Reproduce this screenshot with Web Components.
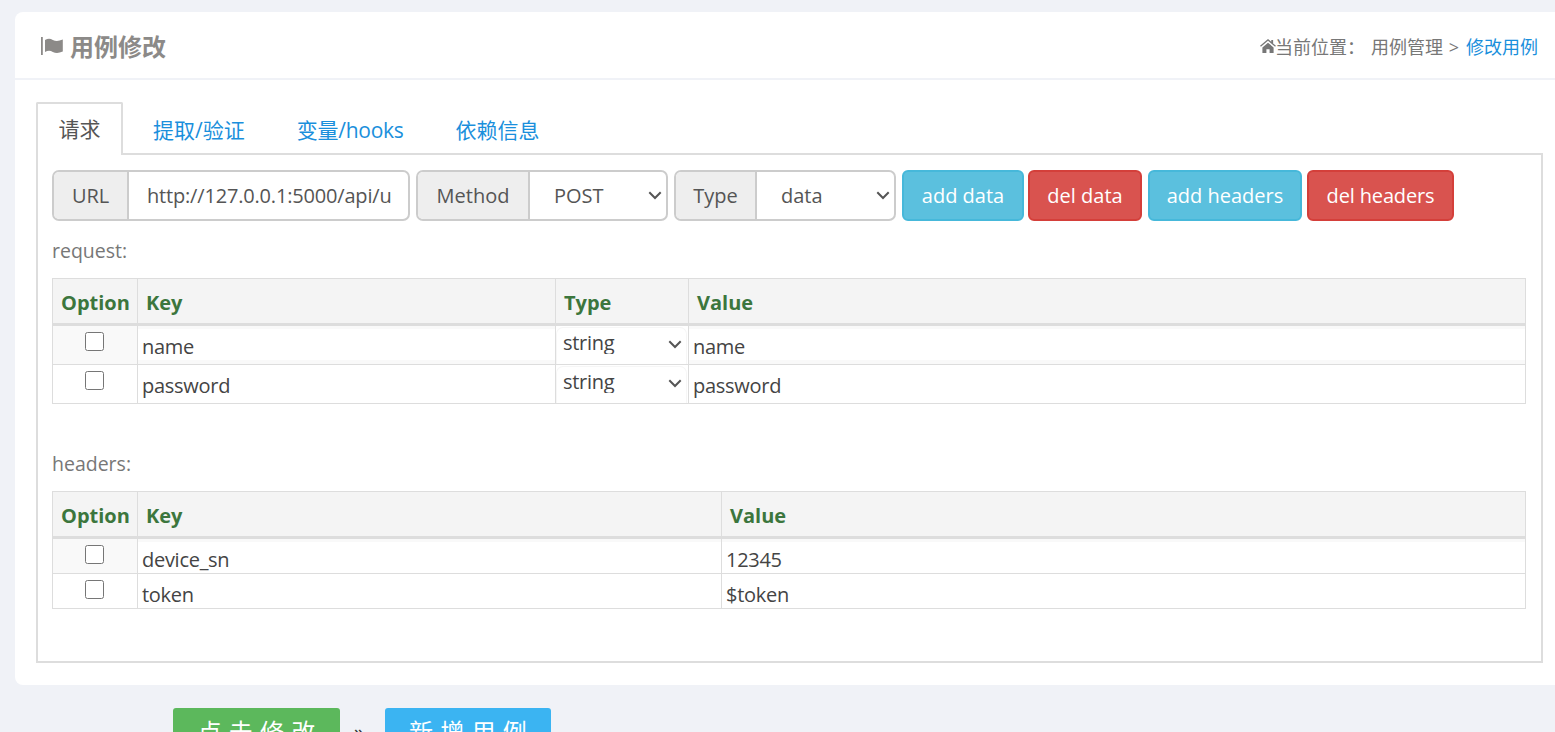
<!DOCTYPE html>
<html lang="zh"><head><meta charset="utf-8"><title>用例修改</title>
<style>
html,body{margin:0;padding:0;height:732px;overflow:hidden;background:#f0f2f7}
body{font-family:"Open Sans","Noto Sans CJK SC",sans-serif;color:#555}
</style></head><body>
<case-page>
  <case-card>
    <case-header slot="header">
      <span slot="title">用例修改</span>
      <span slot="crumb">当前位置：</span>
      <span slot="crumb2">用例管理 &gt;</span>
      <span slot="crumb3">修改用例</span>
    </case-header>
    <case-tabs>
      <tab-item active>请求</tab-item>
      <tab-item>提取/验证</tab-item>
      <tab-item style="letter-spacing:-.25px;padding-right:22px">变量/hooks</tab-item>
      <tab-item>依赖信息</tab-item>
    </case-tabs>
    <tab-panel>
      <tool-bar>
        <input-group label="URL" w="358" lw="75" style="letter-spacing:-.18px">http://127.0.0.1:5000/api/u</input-group>
        <input-group label="Method" w="252" lw="112" select>POST</input-group>
        <input-group label="Type" w="222" lw="81" select>data</input-group>
        <flat-btn kind="info" w="122">add data</flat-btn>
        <flat-btn kind="danger" w="114" style="margin-left:-2px">del data</flat-btn>
        <flat-btn kind="info" w="154">add headers</flat-btn>
        <flat-btn kind="danger" w="147" style="margin-left:-1px;letter-spacing:-.15px">del headers</flat-btn>
      </tool-bar>
      <sec-label style="--t:17px;--b:14px">request:</sec-label>
      <data-table cols="85px 418px 133px 1fr" style="--rh:39px;--rh1:38px;--pb:4px;--gb:4px">
        <t-h>Option</t-h><t-h>Key</t-h><t-h>Type</t-h><t-h>Value</t-h>
        <t-c box odd></t-c><t-c odd>name</t-c><t-c sel odd>string</t-c><t-c odd>name</t-c>
        <t-c box></t-c><t-c>password</t-c><t-c sel>string</t-c><t-c>password</t-c>
      </data-table>
      <sec-label style="--t:47px;--b:14px">headers:</sec-label>
      <data-table cols="85px 584px 1fr" style="--rh:35px;--rh1:34px;--pb:0px;--gb:0px">
        <t-h>Option</t-h><t-h>Key</t-h><t-h>Value</t-h>
        <t-c box odd></t-c><t-c odd>device_sn</t-c><t-c odd>12345</t-c>
        <t-c box></t-c><t-c>token</t-c><t-c>$token</t-c>
      </data-table>
    </tab-panel>
  </case-card>
  <action-bar>
    <big-btn color="#5cb85c" w="167">点 击 修 改</big-btn>
    <span class="sep">»</span>
    <big-btn color="#3bb4f2" w="166">新 增 用 例</big-btn>
  </action-bar>
</case-page>
<script>
const chev='<svg width="14" height="9" viewBox="0 0 14 9"><path d="M1.300 1.300 7 7l5.700-5.700" fill="none" stroke="#555" stroke-width="2"/></svg>';
const el=(name,css,html,after)=>{customElements.define(name,class extends HTMLElement{
  constructor(){super();this.attachShadow({mode:'open'}).innerHTML=`<style>${css}</style>${typeof html==='function'?html(this):html}`;}
  connectedCallback(){after&&after(this);}
});};
el('case-page',':host{display:block;padding:12px 0 0 15px;box-sizing:border-box;height:732px;overflow:hidden}','<slot></slot>');
el('case-card',':host{display:block;background:#fff;border-radius:8px 0 0 8px;height:673px;box-sizing:border-box}','<slot name="header"></slot><slot></slot>');
el('case-header',`:host{display:flex;align-items:center;height:68px;box-sizing:border-box;border-bottom:2px solid #f0f2f7;padding:1px 17px 0 25px;color:#8a8a8a}
 .t{display:flex;align-items:center;gap:7px;font-size:24px;font-weight:700;color:#8c8a88;flex:1}
 .c{display:flex;align-items:center;font-size:18px;color:#777}
 .c svg{margin-right:-1px}
 ::slotted([slot=crumb2]){margin-left:6px;word-spacing:1px}
 ::slotted([slot=crumb3]){color:#1a8fdc;margin-left:7px}`,
 `<div class="t"><svg width="23" height="22" viewBox="0 0 23 22"><path fill="#8c8a88" d="M1 2h1.800v18H1z"/><path fill="#8c8a88" d="M5 5c3-1.600 5.300-1.500 7.800 0 3 1.500 6 1.200 10-.4v12c-4 1.600-7 1.800-10 .3-2.500-1.500-4.800-1.600-7.800 0z"/></svg><slot name="title"></slot></div>
 <div class="c"><svg width="16" height="14" viewBox="0 0 17 15"><path fill="#777" d="M8.500 0 0 7.200l.9 1.100L8.500 2l7.600 6.300.9-1.100-3-2.500V1h-2v2zM2.500 9v6h4.300v-4h3.400v4h4.300V9L8.500 4z"/></svg><slot name="crumb"></slot><slot name="crumb2"></slot><slot name="crumb3"></slot></div>`);
el('case-tabs',':host{display:flex;align-items:flex-start;padding:22px 0 0 21px;height:52px;box-sizing:content-box;margin-bottom:-1px;position:relative;z-index:1}','<slot></slot>');
el('tab-item',`:host{display:flex;align-items:center;justify-content:center;padding:1px 22px 0 30px;font-size:21px;color:#1a8fdc;height:52px;box-sizing:border-box}
 :host([active]){color:#555;background:#fff;border:2px solid #ddd;border-bottom:0;padding:0 20px 3px;width:87px;height:53px;border-radius:2px 2px 0 0}`,'<slot></slot>');
el('tab-panel',':host{display:block;margin:0 12px 0 21px;height:510px;box-sizing:border-box;border:2px solid #ddd;padding:15px 15px 0 14px}','<slot></slot>');
el('tool-bar',':host{display:flex;gap:6px;height:51px}','<slot></slot>');
el('input-group',`:host{display:flex;box-sizing:border-box;height:51px;border:2px solid #ccc;border-radius:7px;font-size:20px;color:#555;overflow:hidden;flex:none}
 .l{display:flex;align-items:center;justify-content:center;background:#eee;border-right:2px solid #ccc;box-sizing:border-box;flex:none}
 .v{flex:1;display:flex;align-items:center;padding-left:18px;white-space:nowrap;overflow:hidden;position:relative}
 svg{position:absolute;right:4px;top:19px}`,
 h=>`<div class="l" style="width:${h.getAttribute('lw')}px">${h.getAttribute('label')}</div><div class="v"${h.hasAttribute('select')?' style="padding-left:24px"':''}><slot></slot>${h.hasAttribute('select')?chev:''}</div>`,
 h=>{h.style.width=h.getAttribute('w')+'px'});
el('flat-btn',`:host{display:flex;align-items:center;justify-content:center;box-sizing:border-box;height:51px;border-radius:6px;font-size:20px;color:#fff;flex:none;border:2px solid}
 :host([kind=info]){background:#5bc0de;border-color:#46b8da}:host([kind=danger]){background:#d9534f;border-color:#d43f3a}`,'<slot></slot>',h=>{h.style.width=h.getAttribute('w')+'px'});
el('sec-label',':host{display:block;font-size:19.5px;line-height:26px;color:#777;margin:var(--t) 0 var(--b)}','<slot></slot>');
el('data-table',':host{display:grid;box-sizing:border-box;width:1474px;border-right:1px solid #ddd;border-bottom:1px solid #ddd}','<slot></slot>',h=>{h.style.gridTemplateColumns=h.getAttribute('cols')});
el('t-h',':host{display:flex;align-items:center;box-sizing:border-box;height:48px;background:#f4f4f4;border:solid #ddd;border-width:1px 0 3px 1px;padding:3px 7px 0 8px;font-size:20px;font-weight:700;color:#3c763d}','<slot></slot>');
el('t-c',`:host{display:flex;align-items:flex-end;box-sizing:border-box;height:var(--rh);border-left:1px solid #ddd;border-top:1px solid #ddd;padding:0 4px var(--pb);font-size:20px;letter-spacing:-.28px;color:#444;position:relative;background:#fff}
 :host([odd]){height:var(--rh1);border-top:0;background:linear-gradient(#f9f9f9 3px,#fff 3px,#fff calc(100% - var(--gb)),#f9f9f9 calc(100% - var(--gb)))}
 :host([box]){justify-content:center;align-items:flex-start;padding:6px 2px 0 0}
 :host([box][odd]){background:#f9f9f9}
 :host([sel]){align-items:stretch;padding:0;background:#fff}
 .s{flex:1;box-sizing:border-box;border:1px solid #f6f6f6;border-bottom:0;border-radius:7px 7px 0 0;margin:1px 1px 0 0;padding:1px 0 0 6px;position:relative}
 .i{height:25px;overflow:hidden}
 input{width:19px;height:19px;margin:0}
 svg{position:absolute;right:4px;top:12px}`,
 h=>h.hasAttribute('box')?'<input type="checkbox">':h.hasAttribute('sel')?`<div class="s"><div class="i"><slot></slot></div>${chev}</div>`:'<slot></slot>');
el('action-bar',':host{display:flex;align-items:flex-start;padding:23px 0 0 158px}::slotted(.sep){font-size:20px;color:#333;margin:10px 21px 0 14px}','<slot></slot>');
el('big-btn',':host{display:flex;justify-content:center;align-items:flex-start;padding-top:5px;height:50px;box-sizing:border-box;border-radius:3px;font-size:24px;word-spacing:1px;color:#fff;flex:none}','<slot></slot>',h=>{h.style.width=h.getAttribute('w')+'px';h.style.background=h.getAttribute('color')});
</script>
</body></html>
